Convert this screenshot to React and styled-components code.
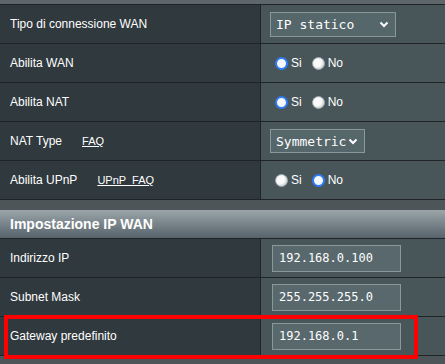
import React from "react";
import styled, { createGlobalStyle } from "styled-components";

const GlobalStyle = createGlobalStyle`
  html, body {
    margin: 0;
    padding: 0;
    background: #4d5559;
  }
  body {
    font-family: "Liberation Sans", Arial, sans-serif;
  }
`;

const Page = styled.div`
  width: 445px;
  height: 364px;
  overflow: hidden;
  background: #4d5559;
`;

const TopStrip = styled.div`
  height: 4px;
  background: #5d666b;
`;

const Table = styled.div`
  display: flex;
  flex-direction: column;
  border-bottom: 1px solid #1e2427;
`;

const Row = styled.div`
  position: relative;
  display: grid;
  grid-template-columns: 260px 1px 1fr;
  height: 38px;
  border-top: 1px solid #1e2427;
`;

const Label = styled.div`
  display: flex;
  align-items: center;
  padding-left: 10px;
  background: #2f393e;
  color: #ffffff;
  font-size: 12px;
`;

const Divider = styled.div`
  background: #1e2427;
`;

const Cell = styled.div`
  display: flex;
  align-items: center;
  padding-left: ${(p) => p.$pad || 10}px;
  background: #48565a;
`;

const Link = styled.span`
  margin-left: 20px;
  font-size: 11px;
  color: #ffffff;
  text-decoration: underline;
  white-space: pre;
`;

const SelectBox = styled.div`
  box-sizing: border-box;
  display: flex;
  align-items: center;
  justify-content: space-between;
  width: ${(p) => p.$width}px;
  height: ${(p) => p.$height}px;
  padding: 0 6px 0 5px;
  border: 1px solid #8a989c;
  background: #56676b;
  color: #ffffff;
  font-family: "DejaVu Sans Mono", "Liberation Mono", monospace;
  font-size: 13px;
`;

const TextBox = styled.div`
  box-sizing: border-box;
  display: flex;
  align-items: center;
  width: 129px;
  height: 27px;
  margin-left: 1px;
  padding-left: 6px;
  border: 1px solid #8a989c;
  background: #58686c;
  color: #ffffff;
  font-family: "DejaVu Sans Mono", "Liberation Mono", monospace;
  font-size: 12px;
`;

const RadioGroup = styled.div`
  display: flex;
  align-items: center;
  color: #ffffff;
  font-size: 12px;
`;

const Radio = styled.span`
  box-sizing: border-box;
  display: inline-block;
  width: 13px;
  height: 13px;
  border-radius: 50%;
  margin-right: 3px;
  background: ${(p) => (p.$checked ? "#f4f7fb" : "#fafafa")};
  border: ${(p) => (p.$checked ? "2px solid #2f7cf6" : "1px solid #9aa3a8")};
  box-shadow: ${(p) => (p.$checked ? "none" : "inset -1px -1px 2px #c9cdd0")};
`;

const Option = styled.label`
  display: flex;
  align-items: center;
  margin-right: 10px;
`;

const Gap = styled.div`
  height: 10px;
  background: #4d5559;
`;

const Header = styled.div`
  display: flex;
  align-items: center;
  height: 28px;
  padding-left: 10px;
  background: linear-gradient(#9ba5aa, #56636a);
  color: #ffffff;
  font-weight: bold;
  font-size: 14px;
`;

const Highlight = styled.div`
  position: absolute;
  left: 4px;
  top: -2px;
  width: 414px;
  height: 44px;
  box-sizing: border-box;
  border: 4px solid #ff0000;
  pointer-events: none;
`;

const Chevron = () => (
  <svg width="10" height="7" viewBox="0 0 10 7">
    <path d="M1.5 1.5 L5 5 L8.5 1.5" fill="none" stroke="#ffffff" strokeWidth="2" />
  </svg>
);

const YesNo = ({ yes }) => (
  <RadioGroup>
    <Option>
      <Radio $checked={yes} />
      Si
    </Option>
    <Option>
      <Radio $checked={!yes} />
      No
    </Option>
  </RadioGroup>
);

const wanRows = [
  { label: "Tipo di connessione WAN", kind: "select", value: "IP statico", width: 126, height: 25 },
  { label: "Abilita WAN", kind: "radio", yes: true },
  { label: "Abilita NAT", kind: "radio", yes: true },
  { label: "NAT Type", link: "FAQ", kind: "select", value: "Symmetric", width: 95, height: 24 },
  { label: "Abilita UPnP", link: "UPnP  FAQ", kind: "radio", yes: false },
];

const ipRows = [
  { label: "Indirizzo IP", value: "192.168.0.100" },
  { label: "Subnet Mask", value: "255.255.255.0" },
  { label: "Gateway predefinito", value: "192.168.0.1", marked: true },
];

const App = () => {
  return (
    <Page>
      <GlobalStyle />
      <TopStrip />
      <Table>
        {wanRows.map((row) => (
          <Row key={row.label}>
            <Label>
              {row.label}
              {row.link && <Link>{row.link}</Link>}
            </Label>
            <Divider />
            {row.kind === "select" ? (
              <Cell $pad={9}>
                <SelectBox $width={row.width} $height={row.height}>
                  <span>{row.value}</span>
                  <Chevron />
                </SelectBox>
              </Cell>
            ) : (
              <Cell $pad={14}>
                <YesNo yes={row.yes} />
              </Cell>
            )}
          </Row>
        ))}
      </Table>
      <Gap />
      <Header>Impostazione IP WAN</Header>
      <Table>
        {ipRows.map((row) => (
          <Row key={row.label}>
            <Label>{row.label}</Label>
            <Divider />
            <Cell>
              <TextBox>{row.value}</TextBox>
            </Cell>
            {row.marked && <Highlight />}
          </Row>
        ))}
      </Table>
    </Page>
  );
};

export default App;
